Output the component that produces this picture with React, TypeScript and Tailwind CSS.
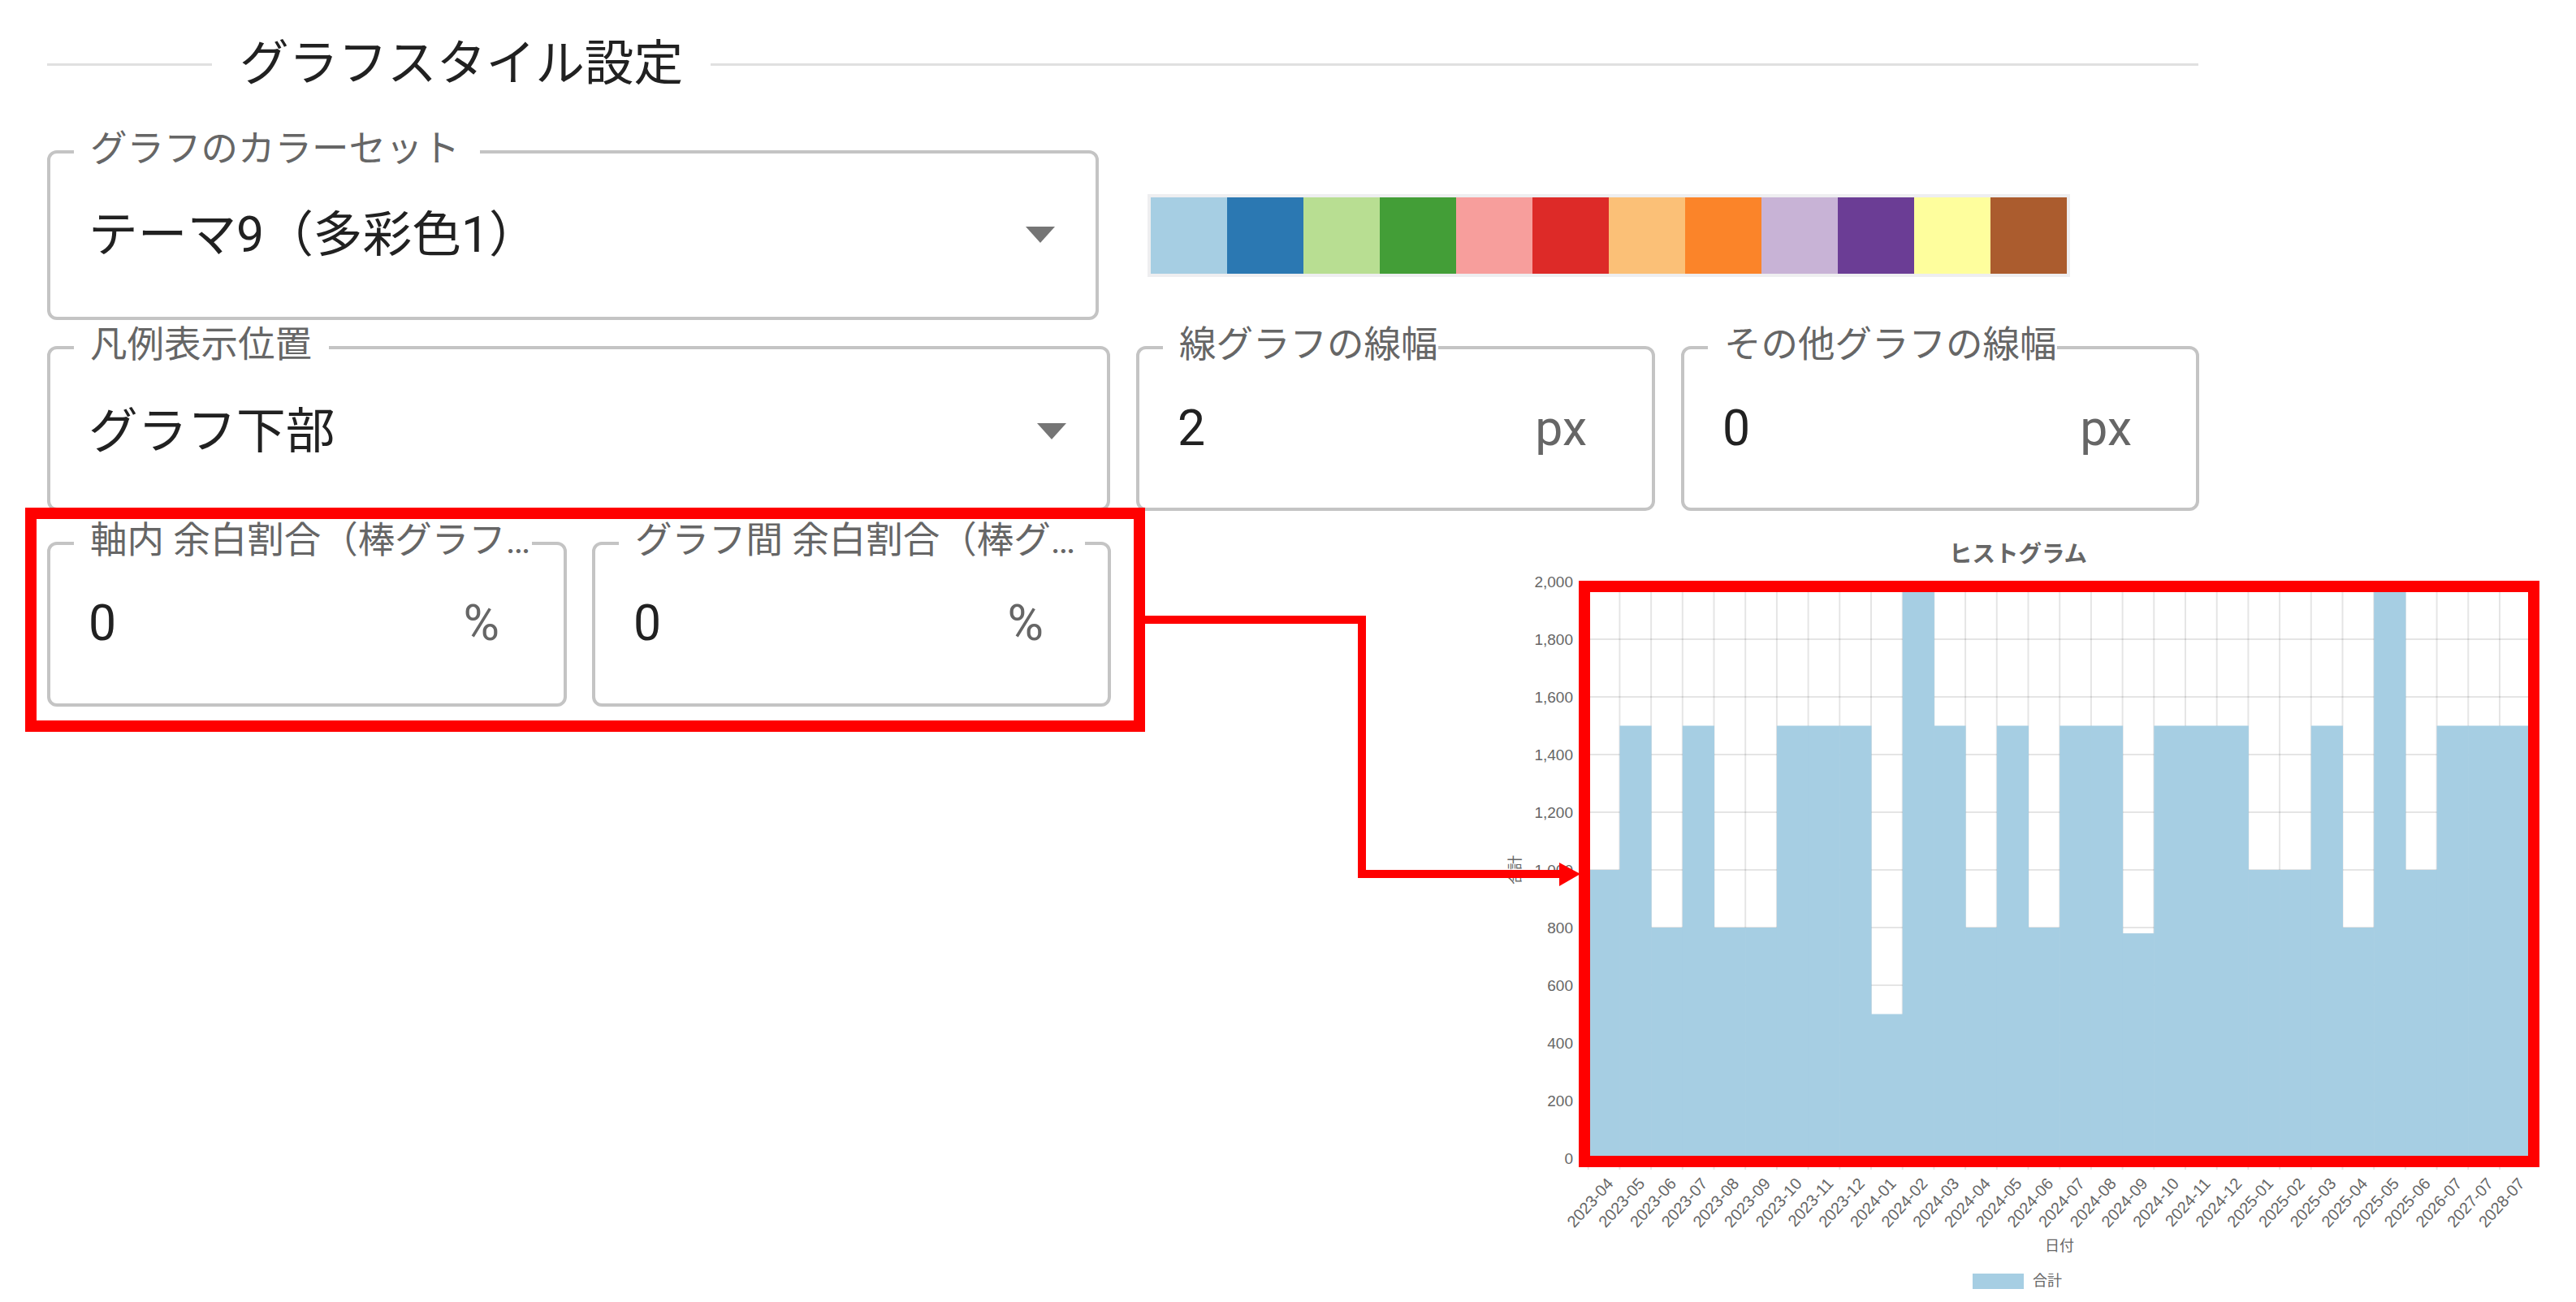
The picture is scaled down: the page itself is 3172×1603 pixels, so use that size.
import React from "react";

const swatches = [
  "#a6cee3", "#2b78b2", "#b8de92", "#439e37", "#f79e9c", "#dd2a28",
  "#fbc077", "#fb8429", "#c8b3d6", "#6b3d95", "#fefe9d", "#ab5c2e",
];

const months = [
  "2023-04", "2023-05", "2023-06", "2023-07", "2023-08", "2023-09", "2023-10", "2023-11", "2023-12",
  "2024-01", "2024-02", "2024-03", "2024-04", "2024-05", "2024-06", "2024-07", "2024-08", "2024-09",
  "2024-10", "2024-11", "2024-12", "2025-01", "2025-02", "2025-03", "2025-04", "2025-05", "2025-06",
  "2026-07", "2027-07", "2028-07",
];

const values = [
  1000, 1500, 800, 1500, 800, 800, 1500, 1500, 1500, 500,
  2000, 1500, 800, 1500, 800, 1500, 1500, 780, 1500, 1500,
  1500, 1000, 1000, 1500, 800, 2000, 1000, 1500, 1500, 1500,
];

const yTicks = [0, 200, 400, 600, 800, 1000, 1200, 1400, 1600, 1800, 2000];

// chart geometry, in page pixels
const plotLeft = 1955.7;
const plotRight = 3116.7;
const plotBottom = 1426;
const barWidth = (plotRight - plotLeft) / 30;
const yOf = (v: number) => plotBottom - v * 0.355;

type FieldProps = {
  label: string;
  value: string;
  unit?: string;
  select?: boolean;
  className: string;
  labelClass: string;
  valueClass: string;
};

const Field = ({ label, value, unit, select, className, labelClass, valueClass }: FieldProps) => {
  return (
    <div className={`relative shrink-0 rounded-[12px] border-[4px] border-[#c4c4c4] ${className}`}>
      <span
        className={`absolute left-[29px] top-[-28px] bg-white pl-[20px] text-[45.5px] leading-[45px] whitespace-nowrap text-[#666666] ${labelClass}`}
      >
        {label}
      </span>
      <div className={`flex items-start justify-between pl-[47px] ${valueClass}`}>
        <span className="text-[60.7px] leading-[70px] text-[#212121]">{value}</span>
        {unit && <span className="text-[60.7px] leading-[70px] text-[#666666]">{unit}</span>}
        {select && (
          <svg className="mt-[24px]" width="36" height="20" viewBox="0 0 36 20">
            <polygon points="0,0 36,0 18,20" fill="#757575" />
          </svg>
        )}
      </div>
    </div>
  );
};

const Chart = () => {
  return (
    <svg
      className="ml-[431px] shrink-0 font-['Liberation_Sans','Noto_Sans_CJK_JP',sans-serif]"
      width="1310"
      height="936"
      viewBox="1830 667 1310 936"
    >
      {months.map((m, i) => (
        <line
          key={m + i}
          x1={plotLeft + i * barWidth}
          x2={plotLeft + i * barWidth}
          y1={716}
          y2={1440}
          stroke="rgba(0,0,0,0.1)"
          strokeWidth="2"
        />
      ))}
      {yTicks.map((t) => (
        <line
          key={t}
          x1={1945}
          x2={plotRight}
          y1={yOf(t)}
          y2={yOf(t)}
          stroke="rgba(0,0,0,0.1)"
          strokeWidth="2"
        />
      ))}
      {values.map((v, i) => (
        <rect
          key={i}
          x={plotLeft + i * barWidth}
          y={yOf(v)}
          width={barWidth + 0.5}
          height={plotBottom - yOf(v)}
          fill="#a6cee3"
        />
      ))}
      <text x="2485" y="692" textAnchor="middle" fontSize="28.5" fontWeight="700" fill="#666666">
        ヒストグラム
      </text>
      {yTicks.map((t) => (
        <text key={t} x="1937" y={yOf(t) + 7} textAnchor="end" fontSize="19" fill="#666666">
          {t.toLocaleString("en-US")}
        </text>
      ))}
      {months.map((m, i) => {
        const x = plotLeft + i * barWidth + 32;
        return (
          <text
            key={m + i}
            x={x}
            y={1458}
            textAnchor="end"
            fontSize="20"
            fill="#666666"
            transform={`rotate(-48 ${x} 1458)`}
          >
            {m}
          </text>
        );
      })}
      <text
        x="1872"
        y="1071"
        textAnchor="middle"
        fontSize="18"
        fill="#666666"
        transform="rotate(-90 1872 1071)"
      >
        合計
      </text>
      <text x="2536" y="1540" textAnchor="middle" fontSize="18" fill="#666666">
        日付
      </text>
      <rect x="2429" y="1568" width="63" height="19" fill="#a6cee3" />
      <text x="2503" y="1583" fontSize="18" fill="#666666">
        合計
      </text>
    </svg>
  );
};

const App = () => {
  return (
    <div className="relative h-[1603px] w-[3172px] overflow-hidden bg-white pl-[58px] pt-[37px] font-['Roboto','Noto_Sans_CJK_JP',sans-serif]">
      <div className="flex h-[84px] w-[2649px] items-center gap-[34px]">
        <div className="h-[3px] w-[203px] bg-[#e0e0e0]"></div>
        <h1 className="text-[60.7px] leading-[84px] font-normal text-[#212121]">グラフスタイル設定</h1>
        <div className="h-[3px] flex-1 bg-[#e0e0e0]"></div>
      </div>

      <div className="mt-[64px] flex items-center gap-[60px]">
        <Field
          select
          label="グラフのカラーセット"
          value="テーマ9（多彩色1）"
          className="h-[209px] w-[1295px]"
          labelClass="pr-[25px]"
          valueClass="pt-[66px] pr-[50px]"
        />
        <div className="flex border-[4px] border-[#eeeef0]">
          {swatches.map((c) => (
            <div key={c} className="h-[94px] w-[94px]" style={{ backgroundColor: c }}></div>
          ))}
        </div>
      </div>

      <div className="mt-[32px] flex gap-[32px]">
        <Field
          select
          label="凡例表示位置"
          value="グラフ下部"
          className="h-[203px] w-[1309px]"
          labelClass="pr-[21px]"
          valueClass="pt-[67px] pr-[50px]"
        />
        <Field
          label="線グラフの線幅"
          value="2"
          unit="px"
          className="h-[203px] w-[639px]"
          labelClass=""
          valueClass="pt-[63px] pr-[80px]"
        />
        <Field
          label="その他グラフの線幅"
          value="0"
          unit="px"
          className="h-[203px] w-[638px]"
          labelClass=""
          valueClass="pt-[63px] pr-[79px]"
        />
      </div>

      <div className="mt-[38px] flex items-start gap-[31px]">
        <Field
          label="軸内 余白割合（棒グラフ…"
          value="0"
          unit="%"
          className="h-[203px] w-[640px]"
          labelClass="pr-[2px]"
          valueClass="pt-[62px] pr-[79px]"
        />
        <Field
          label="グラフ間 余白割合（棒グ…"
          value="0"
          unit="%"
          className="h-[203px] w-[639px]"
          labelClass="pr-[12px]"
          valueClass="pt-[62px] pr-[79px]"
        />
        <Chart />
      </div>

      {/* red annotation drawn over the page */}
      <div className="absolute left-[31px] top-[625px] h-[276px] w-[1379px] border-[14px] border-[#ff0000]"></div>
      <div className="absolute left-[1944px] top-[715px] h-[722px] w-[1183px] border-[14px] border-[#ff0000]"></div>
      <svg className="absolute left-0 top-0" width="3172" height="1603" viewBox="0 0 3172 1603">
        <polyline points="1410,763 1677,763 1677,1076 1925,1076" fill="none" stroke="#ff0000" strokeWidth="10" />
        <polygon points="1920,1062 1946,1076 1920,1091" fill="#ff0000" />
      </svg>
    </div>
  );
};

export default App;
